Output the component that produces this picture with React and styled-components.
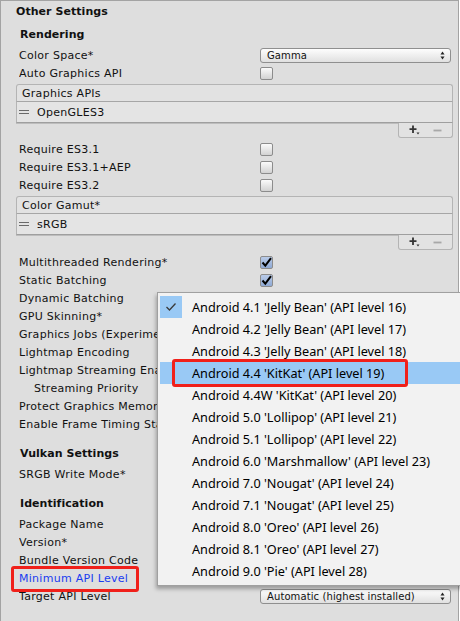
import React from "react";
import styled, { createGlobalStyle, css } from "styled-components";

const Global = createGlobalStyle`
  html, body { margin: 0; padding: 0; background: #ffffff; }
  body { width: 460px; height: 621px; overflow: hidden; }
`;

const Panel = styled.div`
  position: relative;
  width: 459px;
  height: 640px;
  box-sizing: border-box;
  border: 1px solid #a3a3a3;
  background: #dedede;
  padding-top: 2px;
  font-family: "DejaVu Sans", Verdana, sans-serif;
  font-size: 11px;
  letter-spacing: 0.28px;
  color: #111;
  display: flex;
  flex-direction: column;
`;

const Title = styled.div`
  height: 18px;
  line-height: 18px;
  font-weight: bold;
  letter-spacing: 0.05px;
  padding-left: ${(p) => p.$indent || 19}px;
  margin-top: ${(p) => p.$top || 0}px;
  margin-bottom: ${(p) => p.$bottom || 0}px;
  white-space: nowrap;
`;

const Row = styled.div`
  display: grid;
  grid-template-columns: ${(p) => 241 - (p.$indent || 0)}px 1fr;
  padding-left: ${(p) => 18 + (p.$indent || 0)}px;
  height: 18px;
  align-items: center;
`;

const Label = styled.span`
  white-space: nowrap;
  overflow: hidden;
  color: ${(p) => (p.$link ? "#1a3cf0" : "#111")};
  ${(p) =>
    p.$marked &&
    css`
      position: relative;
      overflow: visible;
      justify-self: start;
      &::after {
        content: "";
        position: absolute;
        left: -8px;
        width: 128px;
        box-sizing: border-box;
        top: -6px;
        bottom: -7px;
        border: 3px solid #f0201a;
        border-radius: 3px;
      }
    `}
`;

const Check = styled.span`
  width: 11px;
  height: 11px;
  border: 1px solid #8c8c8c;
  border-radius: 2px;
  background: ${(p) =>
    p.$on
      ? "linear-gradient(#b9cbe8, #8fa9d4)"
      : "linear-gradient(#fbfbfb, #d2d2d2)"};
  display: flex;
  align-items: center;
  justify-content: center;
`;

const Popup = styled.div`
  width: 191px;
  height: 15px;
  box-sizing: border-box;
  border: 1px solid #8f8f8f;
  border-radius: 3px;
  background: linear-gradient(#fdfdfd, #e0e0e0);
  display: flex;
  align-items: center;
  justify-content: space-between;
  padding: 0 5px 0 6px;
  font-size: 10px;
  letter-spacing: 0.1px;
`;

const ListBox = styled.div`
  margin-left: 15px;
  width: 437px;
  display: flex;
  flex-direction: column;
  margin-top: 2px;
`;

const ListHeader = styled.div`
  height: 18px;
  box-sizing: border-box;
  border: 1px solid #b4b4b4;
  border-bottom: 1px solid #a6a6a6;
  border-radius: 3px 3px 0 0;
  background: #e2e2e2;
  padding-left: 5px;
  line-height: 17px;
`;

const ListItem = styled.div`
  height: 21px;
  box-sizing: border-box;
  border: 1px solid #b4b4b4;
  border-top: none;
  border-bottom: 1px solid #9f9f9f;
  background: #e4e4e4;
  display: flex;
  align-items: center;
  gap: 8px;
  padding-left: 1px;
  box-shadow: 0 1px 0 #bdbdbd;
`;

const Footer = styled.div`
  align-self: flex-end;
  width: 55px;
  height: 15px;
  box-sizing: border-box;
  border: 1px solid #b4b4b4;
  border-top: none;
  border-radius: 0 0 3px 3px;
  background: #e2e2e2;
  display: flex;
  align-items: center;
  justify-content: space-around;
  padding: 0 4px;
`;

const Spacer = styled.div`
  height: ${(p) => p.$h}px;
  flex-shrink: 0;
`;

const Menu = styled.div`
  position: absolute;
  left: 156px;
  top: 291px;
  width: 320px;
  box-sizing: border-box;
  padding: 3px 0 3px 2px;
  background: #f2f2f2;
  border: 1px solid #a0a0a0;
  box-shadow: -1px 3px 4px rgba(0, 0, 0, 0.3);
  font-family: "Noto Sans", "Open Sans", sans-serif;
  font-size: 12.7px;
  letter-spacing: 0;
  color: #000;
`;

const MenuItem = styled.div`
  height: 22px;
  display: flex;
  align-items: center;
  background: ${(p) => (p.$sel ? "#99c9f5" : "transparent")};
`;

const CheckCell = styled.div`
  width: 22px;
  height: 22px;
  flex-shrink: 0;
  display: flex;
  align-items: center;
  justify-content: center;
  background: ${(p) => (p.$on ? "#99c9f5" : "transparent")};
`;

const ItemText = styled.span`
  margin-left: 10px;
  white-space: nowrap;
  line-height: 22px;
  ${(p) =>
    p.$marked &&
    css`
      position: relative;
      &::after {
        content: "";
        position: absolute;
        left: -20px;
        width: 236px;
        box-sizing: border-box;
        top: -3px;
        bottom: -3px;
        border: 3px solid #f0201a;
        border-radius: 3px;
      }
    `}
`;

const Arrows = () => (
  <svg width="5" height="9" viewBox="0 0 5 9">
    <path d="M2.5 0.5 L4.5 3.5 H0.5 Z" fill="#222" />
    <path d="M2.5 8.5 L4.5 5.5 H0.5 Z" fill="#222" />
  </svg>
);

const Tick = () => (
  <svg width="11" height="11" viewBox="0 0 11 11">
    <path d="M1.5 5.5 L4.3 8.6 L10 1.2" stroke="#000" strokeWidth="2" fill="none" />
  </svg>
);

const Handle = () => (
  <svg width="10" height="6" viewBox="0 0 10 6" style={{ marginLeft: 1 }}>
    <path d="M0 1.5 H10 M0 4.5 H10" stroke="#6a6a6a" strokeWidth="1" />
  </svg>
);

const PlusMinus = () => (
  <>
    <svg width="11" height="10" viewBox="0 0 11 10">
      <path d="M4 0.5 V8 M0.5 4.2 H7.5" stroke="#333" strokeWidth="1.8" />
      <path d="M7.5 7.5 H10.5 L9 9.5 Z" fill="#333" />
    </svg>
    <svg width="9" height="9" viewBox="0 0 9 9">
      <path d="M0.5 4.5 H8.5" stroke="#a8a8a8" strokeWidth="1.8" />
    </svg>
  </>
);

const MenuCheck = () => (
  <svg width="12" height="10" viewBox="0 0 12 10">
    <path d="M1.5 5 L4.5 8 L10.5 1.5" stroke="#3a3a3a" strokeWidth="1.3" fill="none" />
  </svg>
);

const CheckRow = ({ label, on, indent }) => (
  <Row $indent={indent}>
    <Label>{label}</Label>
    <Check $on={on}>{on && <Tick />}</Check>
  </Row>
);

const PlainRow = ({ label, indent, link, marked, children }) => (
  <Row $indent={indent}>
    <Label $link={link} $marked={marked}>{label}</Label>
    {children || <span />}
  </Row>
);

const ReorderList = ({ title, item }) => (
  <ListBox>
    <ListHeader>{title}</ListHeader>
    <ListItem>
      <Handle />
      <span>{item}</span>
    </ListItem>
    <Footer>
      <PlusMinus />
    </Footer>
  </ListBox>
);

const versions = [
  ["4.1 'Jelly Bean'", 16],
  ["4.2 'Jelly Bean'", 17],
  ["4.3 'Jelly Bean'", 18],
  ["4.4 'KitKat'", 19],
  ["4.4W 'KitKat'", 20],
  ["5.0 'Lollipop'", 21],
  ["5.1 'Lollipop'", 22],
  ["6.0 'Marshmallow'", 23],
  ["7.0 'Nougat'", 24],
  ["7.1 'Nougat'", 25],
  ["8.0 'Oreo'", 26],
  ["8.1 'Oreo'", 27],
  ["9.0 'Pie'", 28],
];

export default function App() {
  return (
    <>
      <Global />
      <Panel>
        <Title $indent={15} $bottom={5}>Other Settings</Title>
        <Title>Rendering</Title>
        <Spacer $h={2} />
        <PlainRow label="Color Space*">
          <Popup>
            <span>Gamma</span>
            <Arrows />
          </Popup>
        </PlainRow>
        <CheckRow label="Auto Graphics API" />
        <ReorderList title="Graphics APIs" item="OpenGLES3" />
        <Spacer $h={2} />
        <CheckRow label="Require ES3.1" />
        <CheckRow label="Require ES3.1+AEP" />
        <CheckRow label="Require ES3.2" />
        <ReorderList title="Color Gamut*" item="sRGB" />
        <Spacer $h={3} />
        <CheckRow label="Multithreaded Rendering*" on />
        <CheckRow label="Static Batching" on />
        <CheckRow label="Dynamic Batching" on />
        <CheckRow label="GPU Skinning*" on />
        <CheckRow label="Graphics Jobs (Experimental)*" />
        <PlainRow label="Lightmap Encoding" />
        <CheckRow label="Lightmap Streaming Enabled" on />
        <PlainRow label="Streaming Priority" indent={15} />
        <CheckRow label="Protect Graphics Memory" />
        <CheckRow label="Enable Frame Timing Stats" />
        <Title $top={12} $bottom={2}>Vulkan Settings</Title>
        <CheckRow label="SRGB Write Mode*" />
        <Title $top={12} $bottom={2}>Identification</Title>
        <PlainRow label="Package Name" />
        <PlainRow label="Version*" />
        <PlainRow label="Bundle Version Code" />
        <PlainRow label="Minimum API Level" link marked />
        <PlainRow label="Target API Level">
          <Popup>
            <span>Automatic (highest installed)</span>
            <Arrows />
          </Popup>
        </PlainRow>
        <Title $top={12}>Configuration</Title>

        <Menu>
          {versions.map(([name, level], i) => (
            <MenuItem key={level} $sel={level === 19}>
              <CheckCell $on={i === 0}>{i === 0 && <MenuCheck />}</CheckCell>
              <ItemText $marked={level === 19}>
                Android {name} (API level {level})
              </ItemText>
            </MenuItem>
          ))}
        </Menu>
      </Panel>
    </>
  );
}
